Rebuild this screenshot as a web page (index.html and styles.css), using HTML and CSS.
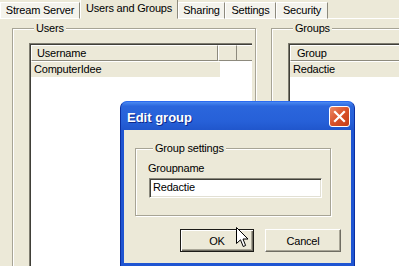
FILE: index.html
```html
<!DOCTYPE html>
<html lang="en">
<head>
    <meta charset="UTF-8">
    <title>Users and Groups</title>
    <link rel="stylesheet" href="styles.css">
</head>
<body>
    <div class="tabs">
        <div class="tab tab-stream">Stream Server</div>
        <div class="tab tab-users active">Users and Groups</div>
        <div class="tab tab-sharing">Sharing</div>
        <div class="tab tab-settings">Settings</div>
        <div class="tab tab-security">Security</div>
    </div>

    <div class="panel">
        <fieldset class="group users">
            <legend>Users</legend>
            <div class="listview">
                <div class="lv-head">
                    <span class="col col-user">Username</span>
                    <span class="col col-extra"></span>
                    <span class="col-fill"></span>
                </div>
                <div class="lv-row">
                    <span class="cell col-user">ComputerIdee</span>
                </div>
            </div>
        </fieldset>

        <fieldset class="group groups">
            <legend>Groups</legend>
            <div class="listview">
                <div class="lv-head">
                    <span class="col col-group">Group</span>
                    <span class="col-fill"></span>
                </div>
                <div class="lv-row">
                    <span class="cell cell-wide">Redactie</span>
                </div>
            </div>
        </fieldset>
    </div>

    <!-- modal dialog over the tab page -->
    <div class="dialog">
        <div class="titlebar">
            <span class="title">Edit group</span>
            <span class="close">
                <svg width="13" height="13" viewBox="0 0 13 13">
                    <path d="M2 2 L11 11 M11 2 L2 11" stroke="#fff" stroke-width="2.2" stroke-linecap="square"/>
                </svg>
            </span>
        </div>
        <div class="dialog-body">
            <fieldset class="group settings">
                <legend>Group settings</legend>
                <div class="field-label">Groupname</div>
                <div class="textbox">Redactie</div>
            </fieldset>
            <div class="buttons">
                <button class="btn default">OK</button>
                <button class="btn">Cancel</button>
            </div>
        </div>
    </div>

    <svg class="cursor" width="13" height="21" viewBox="0 0 13 21">
        <path d="M0.5 0.5 L0.5 16.5 L4.5 12.8 L7.2 19.5 L9.6 18.5 L7 12 L12 12 Z" fill="#fff" stroke="#000" stroke-width="1" stroke-linejoin="miter"/>
    </svg>
</body>
</html>
```

FILE: styles.css
```css
body {
    margin: 0;
    width: 399px;
    height: 266px;
    overflow: hidden;
    position: relative;
    background: #ECE9D8;
    font-family: "Liberation Sans", Arial, sans-serif;
    font-size: 11px;
    letter-spacing: -0.2px;
    color: #000;
}

/* tab strip */
.tabs {
    display: flex;
    align-items: flex-end;
    height: 19px;
    margin-bottom: -1px;
    position: relative;
    z-index: 1;
}
.tab {
    box-sizing: border-box;
    height: 17px;
    line-height: 15px;
    text-align: center;
    background: #F4F3EC;
    border-top: 1px solid #fff;
    border-left: 1px solid #fff;
    border-right: 1px solid #8D8A7D;
    border-bottom: 1px solid #fff;
}
.tab.active {
    height: 20px;
    line-height: 16px;
    background: #ECE9D8;
    border-bottom: 1px solid #ECE9D8;
    padding-bottom: 2px;
}
.tab-stream { width: 80px; }
.tab-users { width: 98px; }
.tab-sharing { width: 47px; }
.tab-settings { width: 51px; }
.tab-security { width: 52px; }

.panel {
    display: flex;
    border-top: 1px solid #fff;
    padding-left: 12px;
    height: 247px;
    overflow: hidden;
}

/* group boxes */
.group {
    box-sizing: border-box;
    margin: 3px 0 0;
    padding: 0;
    min-width: 0;
    border: 1px solid #A7A495;
    box-shadow: inset 1px 1px 0 #fff, 1px 1px 0 #fff;
}
.group legend {
    margin-left: 5px;
    padding: 0 2px;
    line-height: 13px;
    background: #ECE9D8;
}
.users {
    flex: none;
    width: 244px;
    height: 260px;
    padding: 0 3px 0 16px;
}
.groups {
    flex: none;
    width: 200px;
    height: 260px;
    margin-left: 15px;
    padding-left: 16px;
}

/* list views */
.listview {
    margin-top: 8px;
    height: 240px;
    background: #fff;
    border-top: 1px solid #7E7C70;
    border-left: 1px solid #7E7C70;
    box-shadow: inset 1px 1px 0 #403F38;
    padding: 1px 0 0 1px;
}
.lv-head {
    display: flex;
    height: 16px;
    line-height: 15px;
}
.col {
    box-sizing: border-box;
    padding-left: 5px;
    background: #ECE9D8;
    border-top: 1px solid #fff;
    border-left: 1px solid #fff;
    border-right: 1px solid #8D8A7D;
    border-bottom: 1px solid #8D8A7D;
}
.col-user { width: 187px; }
.col-extra { width: 19px; }
.col-group { width: 120px; padding-left: 6px; }
.col-fill {
    flex: 1;
    background: #ECE9D8;
    border-top: 1px solid #fff;
    border-bottom: 1px solid #8D8A7D;
}
.lv-row {
    display: flex;
    margin-top: 1px;
    height: 15px;
    line-height: 15px;
}
.cell {
    padding-left: 3px;
    background: #ECE9D8;
}
.lv-row .col-user {
    border: none;
    width: 186px;
    padding-left: 3px;
}
.cell-wide { flex: 1; padding-left: 3px; }

/* dialog */
.dialog {
    position: absolute;
    left: 120px;
    top: 101px;
    width: 235px;
    height: 166px;
    box-sizing: border-box;
    border-radius: 7px 7px 0 0;
    background: #1F55D2;
    border: 1px solid #0B2FA0;
    border-top-color: #2A6AF0;
    z-index: 2;
}
.titlebar {
    display: flex;
    align-items: center;
    justify-content: space-between;
    height: 28px;
    padding: 0 4px 0 6px;
    border-radius: 6px 6px 0 0;
    background: linear-gradient(#4A8AF2, #2B66DC 15%, #2660D8 70%, #2056CC);
}
.title {
    color: #fff;
    font-size: 13px;
    font-weight: bold;
    letter-spacing: 0;
    text-shadow: 1px 1px 0 #0E2A8A;
    padding-top: 2px;
}
.close {
    display: flex;
    align-items: center;
    justify-content: center;
    width: 19px;
    height: 19px;
    margin-top: 1px;
    border: 1px solid #fff;
    border-radius: 3px;
    background: linear-gradient(135deg, #EC8865, #D9522A 50%, #C43D17);
}
.dialog-body {
    margin: 0 3px;
    height: 133px;
    background: #ECE9D8;
    padding: 12px 0 0;
    box-sizing: border-box;
}
.settings {
    margin: 0 0 0 11px;
    width: 196px;
    height: 74px;
    padding: 0 0 0 12px;
}
.field-label {
    margin-top: 7px;
    line-height: 13px;
}
.textbox {
    box-sizing: border-box;
    margin: 3px 0 0 1px;
    width: 173px;
    height: 20px;
    line-height: 17px;
    padding-left: 3px;
    background: #fff;
    border-top: 1px solid #8A887C;
    border-left: 1px solid #8A887C;
    border-right: 1px solid #fff;
    border-bottom: 1px solid #fff;
    box-shadow: inset 1px 1px 0 #403F38, inset -1px -1px 0 #E2E0D4;
}
.buttons {
    display: flex;
    justify-content: flex-end;
    gap: 11px;
    margin-top: 13px;
    padding-right: 10px;
}
.btn {
    box-sizing: border-box;
    height: 23px;
    width: 76px;
    padding: 0;
    font: inherit;
    letter-spacing: inherit;
    color: #000;
    background: #ECE9D8;
    border: 1px solid;
    border-color: #fff #6F6D62 #6F6D62 #fff;
    box-shadow: inset -1px -1px 0 #A9A697;
}
.btn.default {
    width: 74px;
    border: 1px solid #1C1B17;
    box-shadow: inset 1px 1px 0 #fff, inset -1px -1px 0 #6F6D62, inset -2px -2px 0 #A9A697;
}

.cursor {
    position: absolute;
    left: 236px;
    top: 227px;
    z-index: 3;
}
```
